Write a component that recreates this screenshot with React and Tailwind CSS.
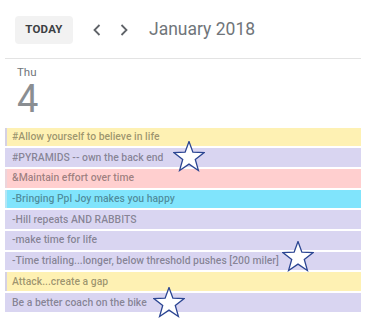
import React from "react";

const rows = [
  { t: "#Allow yourself to believe in life", bg: "bg-[#fef1b3]", bl: "border-[#d5d1e4]" },
  { t: "#PYRAMIDS -- own the back end", bg: "bg-[#d9d5f1]", bl: "border-[#d9d5f1]" },
  { t: "&Maintain effort over time", bg: "bg-[#ffcfcf]", bl: "border-[#ecd5dc]" },
  { t: "-Bringing Ppl Joy makes you happy", bg: "bg-[#80e4fc]", bl: "border-[#b4e6f5]" },
  { t: "-Hill repeats AND RABBITS", bg: "bg-[#d9d5f1]", bl: "border-[#d9d5f1]" },
  { t: "-make time for life", bg: "bg-[#d9d5f1]", bl: "border-[#d9d5f1]" },
  { t: "-Time trialing...longer, below threshold pushes [200 miler]", bg: "bg-[#d9d5f1]", bl: "border-[#d9d5f1]" },
  { t: "Attack...create a gap", bg: "bg-[#fef1b3]", bl: "border-[#d5d1e4]" },
  { t: "Be a better coach on the bike", bg: "bg-[#d9d5f1]", bl: "border-[#d9d5f1]" },
];

function Star({ className }) {
  const pts = [];
  const cx = 16, cy = 16.5, R = 16, r = 6.6;
  for (let i = 0; i < 10; i++) {
    const a = (-90 + i * 36) * Math.PI / 180;
    const rad = i % 2 === 0 ? R : r;
    pts.push(`${(cx + rad * Math.cos(a)).toFixed(2)},${(cy + rad * Math.sin(a)).toFixed(2)}`);
  }
  return (
    <svg className={className} width="32" height="32" viewBox="0 0 32 32">
      <polygon points={pts.join(" ")} fill="white" stroke="#2b4592" strokeWidth="1.3" strokeLinejoin="miter" />
    </svg>
  );
}

export default function App() {
  return (
    <div className="relative w-[373px] h-[323px] bg-white overflow-hidden" style={{ fontFamily: "Roboto, 'Liberation Sans', sans-serif" }}>
      <div className="flex items-center pt-4 pl-[15px]">
        <div className="w-[58px] h-[28px] rounded bg-[#f2f2f2] flex items-center justify-center text-[11.5px] font-bold text-[#3c4043] tracking-[0.2px]">
          TODAY
        </div>
        <svg className="ml-[20px]" width="8" height="12" viewBox="0 0 8 12">
          <polyline points="6.5,1 1.5,6 6.5,11" fill="none" stroke="#5f6368" strokeWidth="1.8" />
        </svg>
        <svg className="ml-[19px]" width="8" height="12" viewBox="0 0 8 12">
          <polyline points="1.5,1 6.5,6 1.5,11" fill="none" stroke="#5f6368" strokeWidth="1.8" />
        </svg>
        <div className="ml-[21px] text-[17.5px] text-[#70757a] leading-none">January 2018</div>
      </div>
      <div className="mt-[14px] ml-[5px] w-[356px] h-px bg-[#e3e3e3]" />
      <div className="pl-[17px] pt-[7px] flex flex-col gap-[1px]">
        <div className="text-[11.5px] text-[#70757a] leading-[13px]">Thu</div>
        <div className="text-[38px] text-[#8a8e92] leading-[38px]">4</div>
      </div>
      <div className="mt-[9.5px] ml-[5px] w-[356px] flex flex-col gap-[2px]">
        {rows.map((r, i) => (
          <div key={i} className={`h-[18.7px] ${r.bg} border-l-2 ${r.bl} flex items-center pl-[5px] text-[10.4px] font-medium text-black/40 whitespace-nowrap overflow-hidden`}>
            {r.t}
          </div>
        ))}
      </div>
      <Star className="absolute left-[173px] top-[141px]" />
      <Star className="absolute left-[282px] top-[241px]" />
      <Star className="absolute left-[153px] top-[287px]" />
    </div>
  );
}
